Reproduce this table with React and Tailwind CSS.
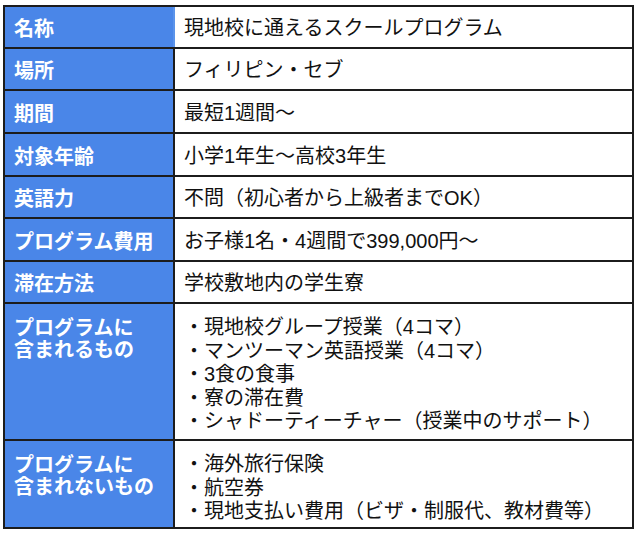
import React from 'react';

const rows = [
  { label: ['名称'], value: ['現地校に通えるスクールプログラム'], h: 'h-[40px]', first: true },
  { label: ['場所'], value: ['フィリピン・セブ'], h: 'h-[40px]' },
  { label: ['期間'], value: ['最短1週間〜'], h: 'h-[41px]' },
  { label: ['対象年齢'], value: ['小学1年生〜高校3年生'], h: 'h-[41px]' },
  { label: ['英語力'], value: ['不問（初心者から上級者までOK）'], h: 'h-[40px]' },
  { label: ['プログラム費用'], value: ['お子様1名・4週間で399,000円〜'], h: 'h-[41px]' },
  { label: ['滞在方法'], value: ['学校敷地内の学生寮'], h: 'h-[40px]' },
  {
    label: ['プログラムに', '含まれるもの'],
    value: [
      '・現地校グループ授業（4コマ）',
      '・マンツーマン英語授業（4コマ）',
      '・3食の食事',
      '・寮の滞在費',
      '・シャドーティーチャー（授業中のサポート）',
    ],
    h: 'h-[135px]',
    multi: true,
  },
  {
    label: ['プログラムに', '含まれないもの'],
    value: ['・海外旅行保険', '・航空券', '・現地支払い費用（ビザ・制服代、教材費等）'],
    h: 'h-[86px]',
    multi: true,
  },
];

const App = () => {
  return (
    <main
      className="w-[640px] h-[535px] bg-white pl-[3px] pt-[5px]"
      style={{ fontFamily: '"Liberation Sans", "Noto Sans CJK JP", sans-serif' }}
    >
      <div className="w-[631px] border-2 border-[#1c1c1c]">
        {rows.map((row, i) => (
          <div
            key={i}
            className={`grid grid-cols-[168px_1fr] ${i > 0 ? 'border-t-2 border-[#1c1c1c]' : ''}`}
          >
            {/* Label */}
            <div
              className={`${row.h} bg-[#4a86e8] text-white font-bold text-[20px] leading-[22px] pl-[9px] flex flex-col ${
                row.multi ? 'justify-start pt-[13px]' : 'justify-center pt-[4px]'
              }`}
            >
              {row.label.map((t) => (
                <span key={t}>{t}</span>
              ))}
            </div>

            {/* Value */}
            <div
              className={`${row.h} border-l-2 ${row.first ? 'border-[#5b93ea]' : 'border-[#1c1c1c]'} text-[#111] text-[20px] leading-[23.5px] pl-[9px] flex flex-col ${
                row.multi ? 'justify-start pt-[12px]' : 'justify-center pt-[4px]'
              }`}
            >
              {row.value.map((t) => (
                <span key={t} className="whitespace-nowrap">
                  {t}
                </span>
              ))}
            </div>
          </div>
        ))}
      </div>
    </main>
  );
};

export default App;
